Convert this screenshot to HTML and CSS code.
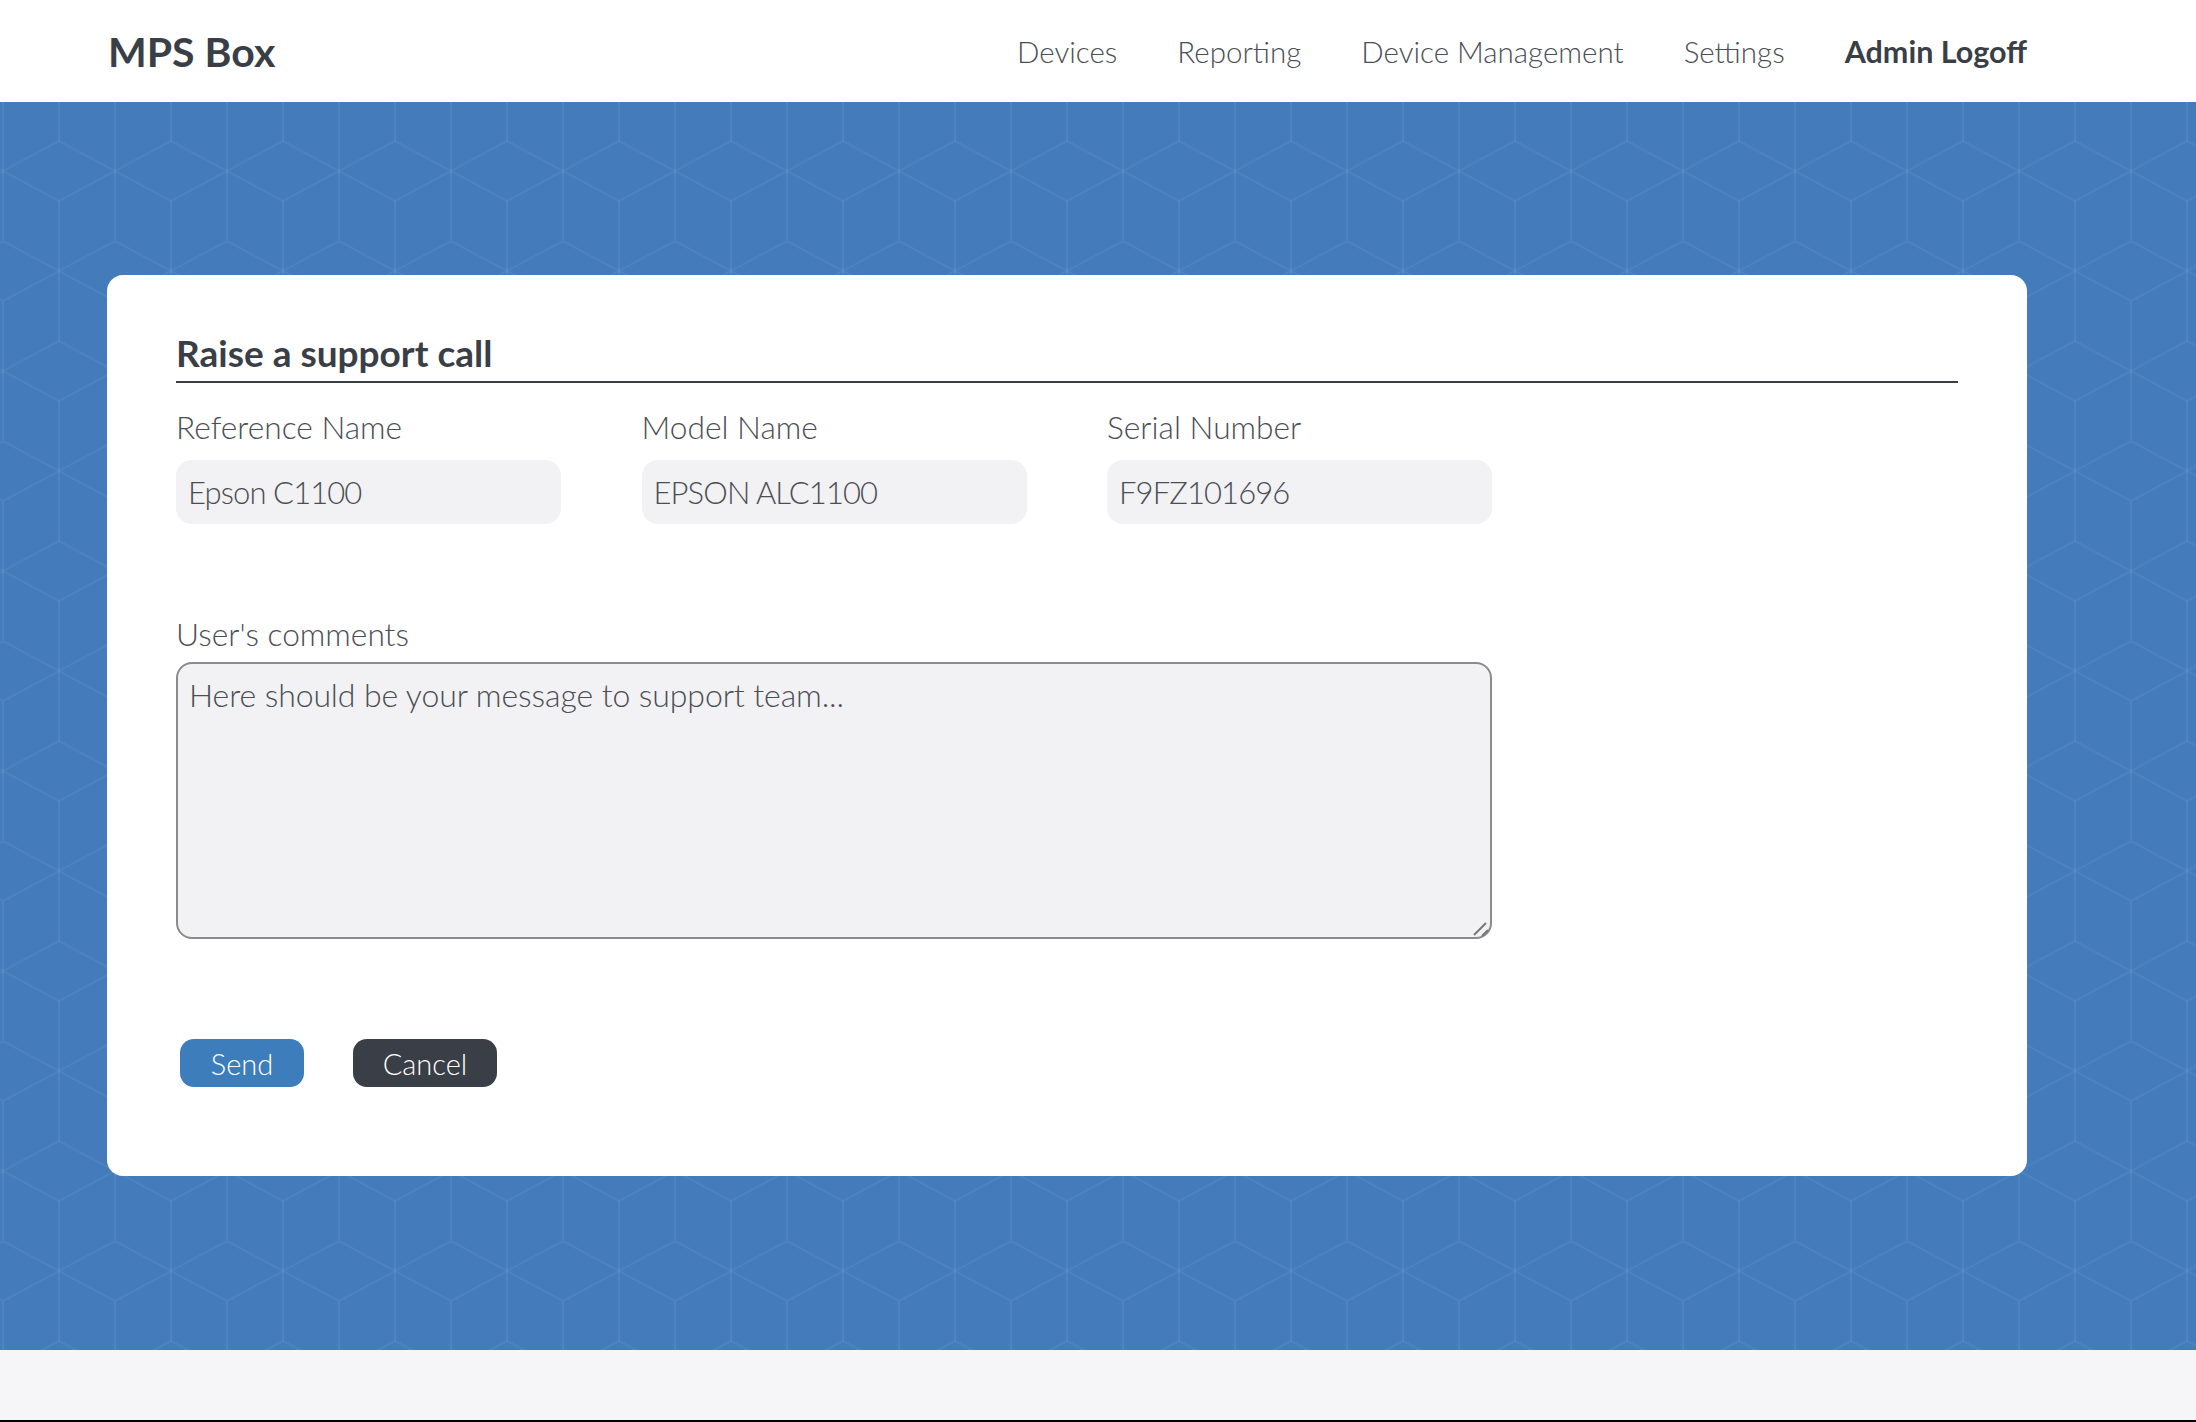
FILE: index.html
```html
<!DOCTYPE html>
<html lang="en">
<head>
<meta charset="utf-8">
<title>MPS Box</title>
<link rel="stylesheet" href="styles.css">
</head>
<body>
<header class="topbar">
  <a class="brand" href="#">MPS Box</a>
  <nav class="nav">
    <a class="nav-link" href="#">Devices</a>
    <a class="nav-link" href="#">Reporting</a>
    <a class="nav-link" href="#">Device Management</a>
    <a class="nav-link" href="#">Settings</a>
    <a class="nav-link nav-link-strong" href="#">Admin Logoff</a>
  </nav>
</header>
<main class="stage">
  <form class="card">
    <h1 class="card-title">Raise a support call</h1>
    <div class="fields">
      <label class="field">
        <span class="field-label">Reference Name</span>
        <input class="field-input" type="text" value="Epson C1100" readonly>
      </label>
      <label class="field">
        <span class="field-label">Model Name</span>
        <input class="field-input" type="text" value="EPSON ALC1100" readonly>
      </label>
      <label class="field">
        <span class="field-label">Serial Number</span>
        <input class="field-input" type="text" value="F9FZ101696" readonly>
      </label>
    </div>
    <label class="comments">
      <span class="field-label">User's comments</span>
      <span class="comments-box">
        <textarea class="comments-input" placeholder="Here should be your message to support team..."></textarea>
        <svg class="grip" width="18" height="18" viewBox="0 0 18 18" aria-hidden="true">
          <path d="M2 15 14 3M10 16 16 10" fill="none" stroke="#77777a" stroke-width="2"/>
        </svg>
      </span>
    </label>
    <div class="actions">
      <button class="btn btn-send" type="button">Send</button>
      <button class="btn btn-cancel" type="button">Cancel</button>
    </div>
  </form>
</main>
<footer class="foot"></footer>
</body>
</html>
```
FILE: styles.css
```css
* { box-sizing: border-box; }
html, body { margin: 0; padding: 0; }
body {
  height: 1422px;
  overflow: hidden;
  background: #f6f5f8;
  border-bottom: 2px solid #000;
  font-family: "Lato", "Liberation Sans", sans-serif;
  color: #3a3f47;
  display: flex;
  flex-direction: column;
}
.topbar {
  height: 102px;
  flex: none;
  background: #fff;
  display: flex;
  align-items: center;
  justify-content: space-between;
  padding: 0 169px 0 108px;
}
.brand {
  font-size: 41px;
  font-weight: 700;
  color: #3a3f47;
  text-decoration: none;
}
.nav { display: flex; gap: 60px; align-items: baseline; }
.nav-link {
  font-size: 29.5px;
  font-weight: 300;
  color: #4a4e55;
  text-decoration: none;
}
.nav-link-strong { font-size: 30.5px; font-weight: 700; color: #3a3f47; }
.stage {
  height: 1248px;
  flex: none;
  padding: 173px 169px 0 107px;
  background-color: #437bbb;
  background-image: url("data:image/svg+xml,%3Csvg xmlns='http://www.w3.org/2000/svg' width='112' height='200'%3E%3Cg fill='none' stroke='%23fff' stroke-width='2'%3E%3Cpath stroke-opacity='.05' d='M0 100 56 70 112 100 56 130ZM0 170 56 200 112 170M0 30 56 0 112 30'/%3E%3Cpath stroke-opacity='.07' d='M56 0V70M56 130V200M0 31V169M112 31V169'/%3E%3C/g%3E%3C/svg%3E");
  background-position: 3px -31px;
}
.card {
  width: 1920px;
  height: 901px;
  background: #fff;
  border-radius: 16px;
  padding: 54px 69px 0;
}
.card-title {
  margin: 0;
  height: 54px;
  border-bottom: 2px solid #3a3f47;
  font-size: 37px;
  line-height: 48px;
  font-weight: 700;
  color: #3a3f47;
}
.fields {
  display: flex;
  gap: 80.5px;
  margin-top: 24px;
}
.field { display: flex; flex-direction: column; width: 385px; }
.field-label {
  font-size: 31.7px;
  line-height: 40px;
  font-weight: 300;
  color: #4a4e55;
}
.field-input {
  margin-top: 13px;
  height: 64px;
  border: 0;
  border-radius: 16px;
  background: #f2f1f3;
  padding: 0 12px;
  font: 300 31px "Lato", "Liberation Sans", sans-serif;
  letter-spacing: -0.9px;
  color: #4a4e55;
  outline: 0;
}
.comments {
  display: flex;
  flex-direction: column;
  width: 1316px;
  margin-top: 90px;
}
.comments-box {
  position: relative;
  display: block;
  margin-top: 8px;
}
.comments-input {
  display: block;
  width: 1316px;
  height: 277px;
  border: 2px solid #8b8b8d;
  border-radius: 16px;
  background: #f2f1f3;
  padding: 11px 11px;
  font: 300 32px "Lato", "Liberation Sans", sans-serif;
  letter-spacing: -0.1px;
  color: #4a4e55;
  outline: 0;
  resize: none;
}
.comments-input::placeholder { color: #4a4e55; opacity: 1; }
.grip {
  position: absolute;
  right: 2px;
  bottom: 1px;
}
.actions {
  display: flex;
  gap: 49px;
  margin: 100px 0 0 4px;
}
.btn {
  height: 48px;
  border: 0;
  border-radius: 14px;
  font: 300 29px "Lato", "Liberation Sans", sans-serif;
  color: #fff;
  padding: 0;
}
.btn-send { width: 124px; background: #3d7dbb; }
.btn-cancel { width: 144px; background: #3a3e47; }
.foot { flex: 1; }
```
